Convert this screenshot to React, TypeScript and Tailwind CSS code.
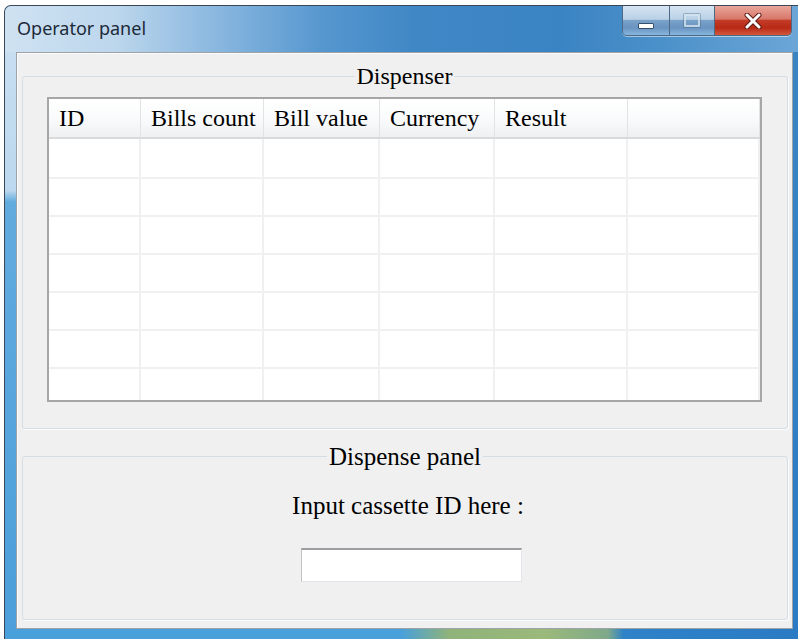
import React from "react";

const columns = [
  { label: "ID", width: "w-[92px]" },
  { label: "Bills count", width: "w-[123px]" },
  { label: "Bill value", width: "w-[116px]" },
  { label: "Currency", width: "w-[115px]" },
  { label: "Result", width: "w-[133px]" },
  { label: "", width: "flex-1" },
];

const rows = [1, 2, 3, 4, 5, 6, 7];

function TitleButtons() {
  return (
    <div className="mr-[6px] flex h-[30px] overflow-hidden rounded-b-[5px] border border-t-0 border-[#4d6985] shadow-[0_1px_0_rgba(255,255,255,0.5)]">
      {/* minimize */}
      <div className="flex w-[47px] items-start justify-center border-r border-[#4d6985] bg-[linear-gradient(to_bottom,#d6e5f2_0%,#b9d0e6_46%,#7aa2c9_50%,#6994c0_75%,#86b6de_100%)] pt-[17px]">
        <div className="h-[6px] w-[16px] rounded-[1px] border border-[#34506d] bg-white" />
      </div>
      {/* maximize */}
      <div className="flex w-[45px] items-start justify-center border-r border-[#4d6985] bg-[linear-gradient(to_bottom,#d6e5f2_0%,#b9d0e6_46%,#7aa2c9_50%,#6994c0_75%,#86b6de_100%)] pt-[8px]">
        <div className="h-[13px] w-[16px] rounded-[1px] border-2 border-[#d6e3ef]/80 shadow-[0_0_0_1px_rgba(60,90,120,0.35)]" />
      </div>
      {/* close */}
      <div className="flex w-[76px] items-start justify-center bg-[linear-gradient(to_bottom,#e8a699_0%,#d8776a_45%,#c33a26_50%,#b82a16_75%,#d3583c_100%)] pt-[7px]">
        <svg width="18" height="16" viewBox="0 0 18 16">
          <path
            d="M3 2 L15 14 M15 2 L3 14"
            stroke="#5a1c14"
            strokeWidth="5"
            strokeLinecap="round"
          />
          <path
            d="M3 2 L15 14 M15 2 L3 14"
            stroke="#ffffff"
            strokeWidth="3"
            strokeLinecap="round"
          />
        </svg>
      </div>
    </div>
  );
}

function DataGrid() {
  return (
    <div className="h-[305px] w-full overflow-hidden border-2 border-[#a6a6a6] bg-white">
      {/* header */}
      <div className="flex h-[40px] border-b-2 border-[#d9dadc] bg-[linear-gradient(to_bottom,#ffffff_0%,#fafbfc_50%,#eef0f2_100%)]">
        {columns.map((col, i) => (
          <div
            key={i}
            className={`${col.width} flex items-center border-r border-[#e2e3e5] pl-[10px] text-[24px] leading-[27px] text-black`}
          >
            {col.label}
          </div>
        ))}
      </div>
      {rows.map((r) => (
        <div
          key={r}
          className={`flex ${r === 1 ? "h-[40px]" : "h-[38px]"} border-b-2 border-[#f0f0f0]`}
        >
          {columns.map((col, i) => (
            <div key={i} className={`${col.width} border-r-2 border-[#f0f0f0]`} />
          ))}
        </div>
      ))}
    </div>
  );
}

function ClientArea() {
  return (
    <div className="flex h-[577px] w-[777px] flex-col border border-[#9ea3a8] bg-[#f0f0f0] font-['Liberation_Serif',serif] shadow-[inset_1px_1px_0_#fbfbfb]">
      <fieldset className="mt-[10px] ml-[5px] mr-[4px] rounded-[3px] border border-[#d3dde5] pt-[7px] pr-[25px] pb-[26px] pl-[24px] shadow-[1px_1px_0_#fafcfd]">
        <legend className="mx-auto px-[2px] text-[24px] leading-[27px] text-black">
          Dispenser
        </legend>
        <DataGrid />
      </fieldset>

      <fieldset className="mt-[14px] ml-[5px] mr-[4px] flex flex-col items-center rounded-[3px] border border-[#d3dde5] pt-[22px] pb-[37px] shadow-[1px_1px_0_#fafcfd]">
        <legend className="mx-auto px-[2px] text-[25px] leading-[27px] text-black">
          Dispense panel
        </legend>
        <div className="ml-[6px] text-[25px] leading-[27px] text-black">
          Input cassette ID here :
        </div>
        <input
          type="text"
          className="mt-[29px] ml-[12px] h-[34px] w-[221px] border border-t-2 border-[#e2e5ea] border-t-[#9c9ea2] border-l-[#bfc1c5] bg-white outline-none"
        />
      </fieldset>
    </div>
  );
}

export default function App() {
  return (
    <div className="h-[639px] w-[798px] overflow-hidden bg-white pt-[5px] pl-[4px]">
      <div className="flex h-[634px] w-[794px] flex-col overflow-hidden rounded-tl-[7px] border-t border-l border-[#3b4756] bg-[#3d8fd0]">
        {/* caption bar */}
        <div className="flex h-[46px] items-start justify-between bg-[linear-gradient(to_right,#cfe2f2_0%,#bcd6ec_14%,#8cb9e0_26%,#5697cf_40%,#3f87c5_52%,#3b84c3_70%,#4a90c9_82%,#6ca6d7_100%)]">
          <div className="pt-[10px] pl-[12px] font-['Noto_Sans',sans-serif] text-[18px] leading-[24px] text-[#1c2a38]">
            Operator panel
          </div>
          <TitleButtons />
        </div>
        <div className="flex">
          <div className="w-[11px] bg-[linear-gradient(to_bottom,#c6def0_0%,#bcd8ee_24%,#62abdf_26%,#4c9fda_100%)]" />
          <ClientArea />
          <div className="flex-1 bg-[linear-gradient(to_bottom,#3b84c3_0%,#2a7bc4_100%)]" />
        </div>
        <div className="flex-1 bg-[linear-gradient(to_right,#4aa0db_0%,#49a0da_50%,#8fb37a_56%,#9bb97a_68%,#7fa98a_76%,#2f82c8_78%,#2a7bc4_100%)]" />
      </div>
    </div>
  );
}
